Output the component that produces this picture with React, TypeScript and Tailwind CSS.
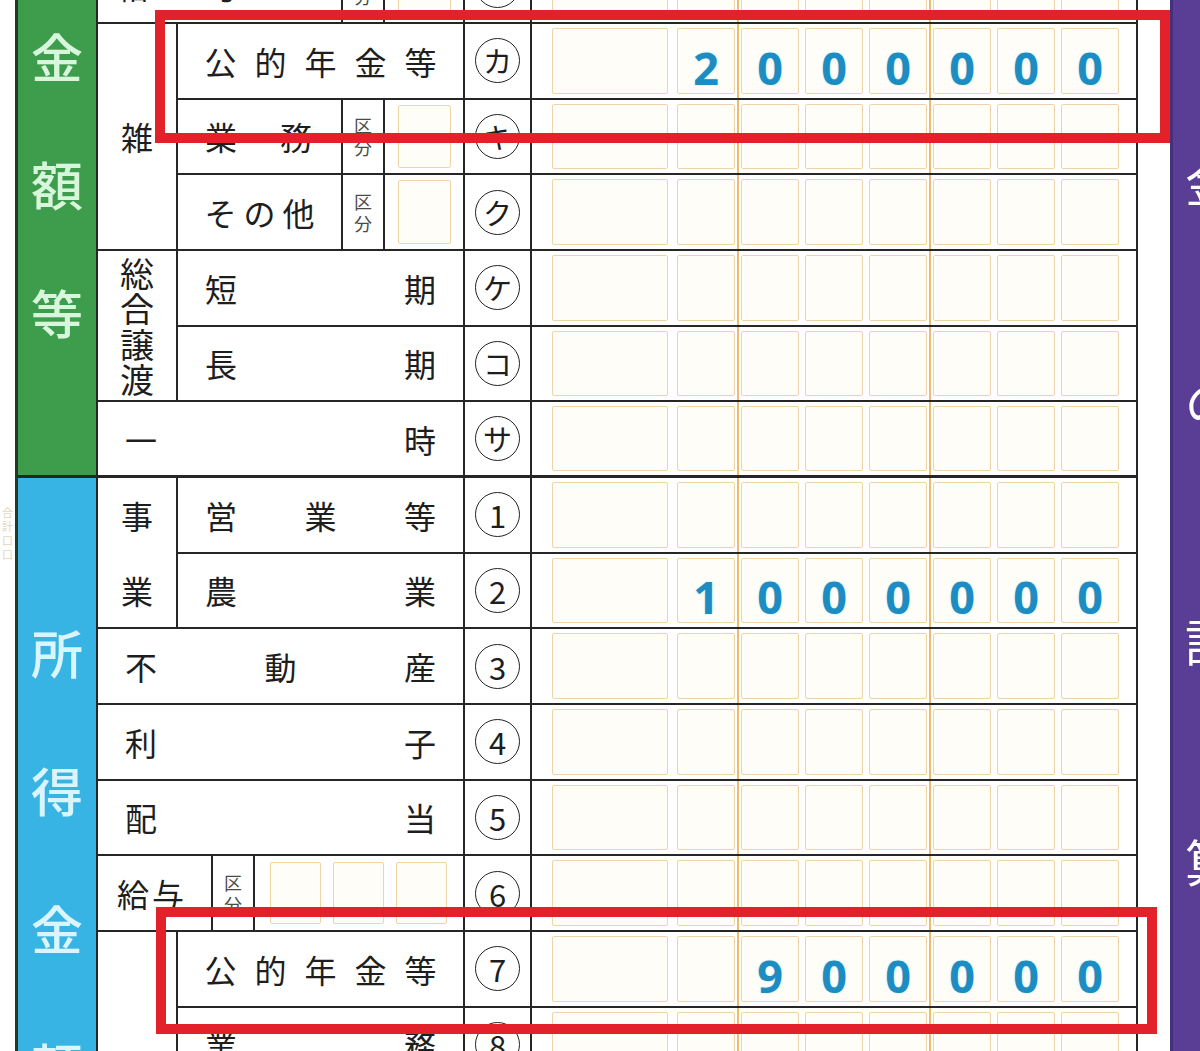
import React from "react";

type Kids = { children?: React.ReactNode; className?: string };

function Cell({ children, className = "", thick }: Kids & { thick?: boolean }) {
  return (
    <div className={`${thick ? "border-b-[3px]" : "border-b-2"} border-r-2 border-[#262626] ${className}`}>
      {children}
    </div>
  );
}

function Box({ children, className = "" }: Kids) {
  return (
    <div className={`rounded-[2px] border-[1.5px] border-[#efd5a6] bg-[#fffdf7] ${className}`}>{children}</div>
  );
}

/* gap between digit boxes, the thousands ones carry an orange rule */
function Gap({ sep }: { sep?: boolean }) {
  if (!sep) return <div className="w-[6px]" />;
  return (
    <div className="-my-[4px] flex w-[6px] justify-center">
      <div className="w-[2px] bg-[#ebbb70]" />
    </div>
  );
}

function Amount({ value = "" }: { value?: string }) {
  const digits = value.padStart(7, " ").split("");
  return (
    <div className="flex h-full py-[4px] pl-[20px]">
      <Box className="w-[116px]" />
      <div className="w-[9px]" />
      {digits.map((d, i) => (
        <React.Fragment key={i}>
          <Box className="flex w-[58px] items-end justify-center pb-[3px]">
            <span className="font-['Noto_Sans',sans-serif] text-[45px] font-bold leading-none text-[#1e8cc0] [text-shadow:0_0_2px_#a5ecff]">
              {d.trim()}
            </span>
          </Box>
          {i < 6 && <Gap sep={i === 0 || i === 3} />}
        </React.Fragment>
      ))}
    </div>
  );
}

function Mark({ c, thick }: { c: string; thick?: boolean }) {
  const digit = /[0-9]/.test(c);
  return (
    <Cell thick={thick} className="flex items-center justify-center">
      <div
        className={`flex h-[45px] w-[45px] items-center justify-center rounded-full border-[1.5px] border-[#222] leading-none ${
          digit ? "text-[31px]" : "text-[29px]"
        }`}
      >
        {c}
      </div>
    </Cell>
  );
}

function Kubun() {
  return (
    <div className="flex w-[44px] flex-col items-center justify-center border-x-2 border-[#262626] text-[18px] leading-[22px] text-[#4a4a4a]">
      <span>区</span>
      <span>分</span>
    </div>
  );
}

function KubunBox() {
  return (
    <div className="flex w-[78px] py-[5px] pl-[13px]">
      <Box className="w-[53px]" />
    </div>
  );
}

function Spread({ chars, className = "" }: { chars: string[]; className?: string }) {
  return (
    <div className={`flex h-full items-center justify-between px-[27px] text-[32px] leading-none ${className}`}>
      {chars.map((c, i) => (
        <span key={i}>{c}</span>
      ))}
    </div>
  );
}

function Pension() {
  return (
    <Cell className="flex items-center justify-center">
      <div className="flex w-[232px] justify-between text-[32px] leading-none">
        {"公的年金等".split("").map((c) => (
          <span key={c}>{c}</span>
        ))}
      </div>
    </Cell>
  );
}

export default function App() {
  return (
    <div className="relative flex h-[1051px] w-[1200px] overflow-hidden bg-white font-['Noto_Sans_CJK_JP','Noto_Sans',sans-serif] text-[#1e1e1e]">
      {/* margin of the sheet */}
      <div className="flex w-[15px] shrink-0 flex-col items-center pt-[505px] text-[11px] leading-[14px] text-[#e6d6b8]">
        <span>合</span>
        <span>計</span>
        <span>口</span>
        <span>口</span>
      </div>

      {/* section bands */}
      <div className="flex w-[83px] shrink-0 flex-col overflow-hidden border-l-[3px] border-r-2 border-l-[#22392a] border-r-[#262626]">
        <div className="flex h-[478px] shrink-0 flex-col items-center gap-[76px] border-b-[3px] border-[#1f2a24] bg-[#3e9d4d] pt-[30px] text-[52px] font-medium leading-none text-[#d8f6dc]">
          <span>金</span>
          <span>額</span>
          <span>等</span>
        </div>
        <div className="flex flex-1 shrink-0 flex-col items-center gap-[86px] bg-[#37b3e4] pt-[148px] text-[52px] font-medium leading-none text-[#d9f5ff]">
          <span>所</span>
          <span>得</span>
          <span>金</span>
          <span>額</span>
        </div>
      </div>

      {/* form table */}
      <div className="w-[1040px] shrink-0 overflow-hidden">
        <div className="mt-[-51.67px] grid auto-rows-[75.67px] grid-cols-[80px_287px_67px_606px]">
          {/* オ 給与 (cut off) */}
          <Cell className="col-span-2 flex">
            <div className="flex w-[243px] items-center gap-[60px] pl-[19px] text-[32px] leading-none">
              <span>給</span>
              <span>与</span>
            </div>
            <Kubun />
            <KubunBox />
          </Cell>
          <Mark c="オ" />
          <Cell>
            <Amount />
          </Cell>

          {/* 雑 */}
          <Cell className="row-span-3 flex items-center justify-center text-[32px] leading-none">雑</Cell>
          <Pension />
          <Mark c="カ" />
          <Cell>
            <Amount value="2000000" />
          </Cell>

          <Cell className="flex">
            <div className="flex w-[163px] items-center gap-[43px] pl-[27px] text-[32px] leading-none">
              <span>業</span>
              <span>務</span>
            </div>
            <Kubun />
            <KubunBox />
          </Cell>
          <Mark c="キ" />
          <Cell>
            <Amount />
          </Cell>

          <Cell className="flex">
            <div className="flex w-[163px] items-center justify-center gap-[7px] text-[32px] leading-none">
              <span>そ</span>
              <span>の</span>
              <span>他</span>
            </div>
            <Kubun />
            <KubunBox />
          </Cell>
          <Mark c="ク" />
          <Cell>
            <Amount />
          </Cell>

          {/* 総合譲渡 */}
          <Cell className="row-span-2 flex flex-col items-center justify-center text-[34px] leading-[35.5px]">
            <span>総</span>
            <span>合</span>
            <span>譲</span>
            <span>渡</span>
          </Cell>
          <Cell>
            <Spread chars={["短", "期"]} />
          </Cell>
          <Mark c="ケ" />
          <Cell>
            <Amount />
          </Cell>

          <Cell>
            <Spread chars={["長", "期"]} />
          </Cell>
          <Mark c="コ" />
          <Cell>
            <Amount />
          </Cell>

          <Cell thick className="col-span-2">
            <Spread chars={["一", "時"]} />
          </Cell>
          <Mark thick c="サ" />
          <Cell thick>
            <Amount />
          </Cell>

          {/* 事業 */}
          <Cell className="row-span-2 flex flex-col items-center justify-around text-[32px] leading-none">
            <span>事</span>
            <span>業</span>
          </Cell>
          <Cell>
            <Spread chars={["営", "業", "等"]} />
          </Cell>
          <Mark c="1" />
          <Cell>
            <Amount />
          </Cell>

          <Cell>
            <Spread chars={["農", "業"]} />
          </Cell>
          <Mark c="2" />
          <Cell>
            <Amount value="1000000" />
          </Cell>

          <Cell className="col-span-2">
            <Spread chars={["不", "動", "産"]} />
          </Cell>
          <Mark c="3" />
          <Cell>
            <Amount />
          </Cell>

          <Cell className="col-span-2">
            <Spread chars={["利", "子"]} />
          </Cell>
          <Mark c="4" />
          <Cell>
            <Amount />
          </Cell>

          <Cell className="col-span-2">
            <Spread chars={["配", "当"]} />
          </Cell>
          <Mark c="5" />
          <Cell>
            <Amount />
          </Cell>

          <Cell className="col-span-2 flex">
            <div className="flex w-[113px] items-center gap-[3px] pl-[19px] text-[32px] leading-none">
              <span>給</span>
              <span>与</span>
            </div>
            <Kubun />
            <div className="flex w-[208px] gap-[12px] py-[6px] pl-[15px]">
              <Box className="w-[51px]" />
              <Box className="w-[51px]" />
              <Box className="w-[51px]" />
            </div>
          </Cell>
          <Mark c="6" />
          <Cell>
            <Amount />
          </Cell>

          {/* 雑 (second block) */}
          <Cell className="row-span-2" />
          <Pension />
          <Mark c="7" />
          <Cell>
            <Amount value="900000" />
          </Cell>

          <Cell>
            <Spread chars={["業", "務"]} />
          </Cell>
          <Mark c="8" />
          <Cell>
            <Amount />
          </Cell>
        </div>
      </div>

      <div className="w-[32px] shrink-0" />

      {/* purple band on the right */}
      <div className="flex w-[30px] shrink-0 flex-col overflow-hidden border-l-[3px] border-[#46307c] bg-[#5a3e96] pl-[12px] pt-[155px] text-[50px] leading-none text-white">
        <span>金</span>
        <span className="mt-[170px]">の</span>
        <span className="mt-[190px]">計</span>
        <span className="mt-[170px]">算</span>
      </div>

      {/* red highlight frames */}
      <div className="absolute left-[155px] top-[10px] h-[133px] w-[1015px] border-[10px] border-[#e2212a]" />
      <div className="absolute left-[156px] top-[907px] h-[127px] w-[1001px] border-[10px] border-[#e2212a]" />
    </div>
  );
}
